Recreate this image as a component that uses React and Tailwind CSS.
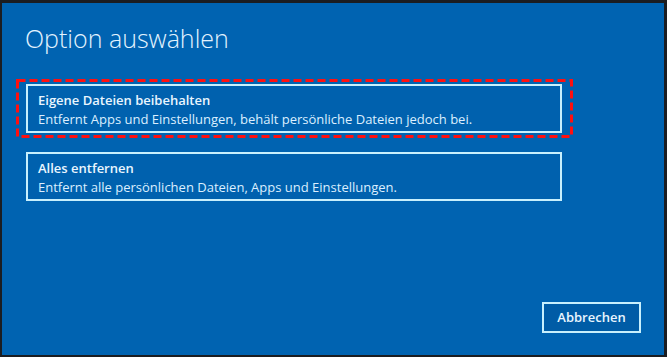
import React from 'react';

const options = [
  {
    title: 'Eigene Dateien beibehalten',
    text: 'Entfernt Apps und Einstellungen, behält persönliche Dateien jedoch bei.',
    marked: true,
  },
  {
    title: 'Alles entfernen',
    text: 'Entfernt alle persönlichen Dateien, Apps und Einstellungen.',
    marked: false,
  },
];

const OptionCard = ({ title, text }) => (
  <button className="block w-[536px] h-[49px] border-2 border-[#c8f0fd] bg-[#0061ae] pl-[10px] pt-[2px] text-left">
    <div className="text-[13px] leading-[20px] font-semibold text-[#eaf6ff]">{title}</div>
    <div className="text-[13px] leading-[19px] text-[#dcefff]">{text}</div>
  </button>
);

const App = () => {
  return (
    <div
      className="w-[667px] h-[357px] bg-[#1b1d21] pt-[3px] pl-[2px] pr-[3px] pb-[2px]"
      style={{ fontFamily: '"Open Sans", "Noto Sans", sans-serif' }}
    >
      <div className="flex flex-col h-full bg-[#0063b1] pl-[14px] pr-[23px] pb-[22px]">
        <h1 className="mt-[20px] ml-[9px] text-[25px] leading-[31px] font-light text-[#e3f3ff]">
          Option auswählen
        </h1>

        <div className="mt-[25px] flex flex-col">
          {/* first option, marked with a red dashed frame */}
          <div className="relative w-[557px] pt-[5px] pb-[5px] pl-[10px]">
            <svg className="absolute inset-0 pointer-events-none" width="557" height="59">
              <rect
                x="1.5"
                y="1.5"
                width="554"
                height="56"
                fill="none"
                stroke="#ff1010"
                strokeWidth="3"
                strokeDasharray="8 4"
              />
            </svg>
            <OptionCard {...options[0]} />
          </div>

          <div className="mt-[14px] ml-[10px]">
            <OptionCard {...options[1]} />
          </div>
        </div>

        <div className="mt-auto flex justify-end">
          <button className="w-[99px] h-[31px] border-2 border-[#c8f0fd] bg-[#005ca6] text-[13px] font-semibold text-[#eaf6ff]">
            Abbrechen
          </button>
        </div>
      </div>
    </div>
  );
};

export default App;
